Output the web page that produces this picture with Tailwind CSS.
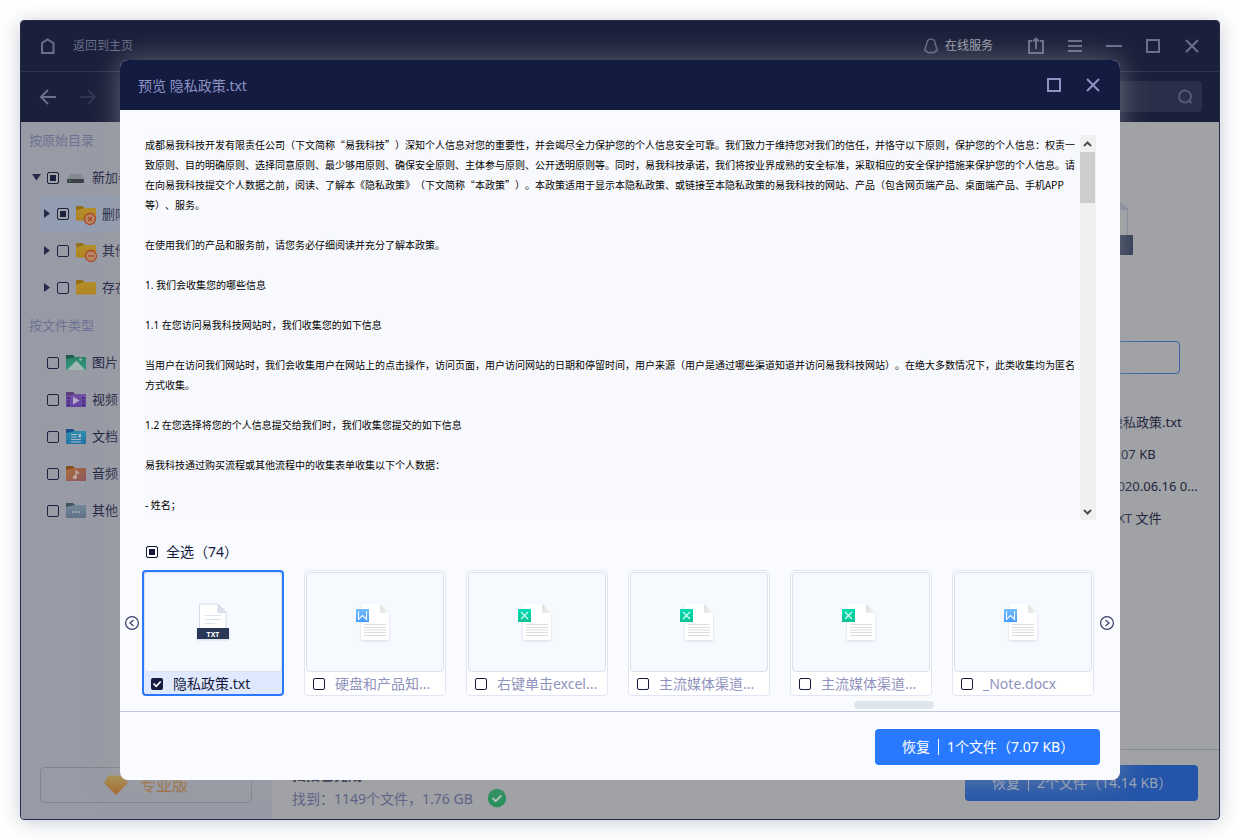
<!DOCTYPE html>
<html lang="zh-CN">
<head>
<meta charset="utf-8">
<title>预览 隐私政策.txt</title>
<script src="https://cdn.jsdelivr.net/npm/@tailwindcss/browser@4"></script>
</head>
<body class="h-screen overflow-hidden bg-white p-5 font-['Noto_Sans','Noto_Sans_CJK_SC',sans-serif] text-sm text-[#141b3f]">
<svg class="absolute h-0 w-0" aria-hidden="true">
  <defs>
    <linearGradient id="gw" x1="0" y1="0" x2="0" y2="1"><stop offset="0" stop-color="#74bdff"/><stop offset="1" stop-color="#4598fb"/></linearGradient>
    <linearGradient id="gx" x1="0" y1="0" x2="0" y2="1"><stop offset="0" stop-color="#00dcb4"/><stop offset="1" stop-color="#0cc292"/></linearGradient>
    <linearGradient id="gf" x1="0" y1="0" x2="1" y2="1"><stop offset="0" stop-color="#dcdcdc"/><stop offset="1" stop-color="#f4f4f4"/></linearGradient>
    <linearGradient id="gy" x1="0" y1="0" x2="0" y2="1"><stop offset="0" stop-color="#b48f2c"/><stop offset="1" stop-color="#b08322"/></linearGradient>
    <linearGradient id="gd" x1="0" y1="0" x2="0" y2="1"><stop offset="0" stop-color="#ab9250"/><stop offset="1" stop-color="#a8662c"/></linearGradient>
    <linearGradient id="gg" x1="0" y1="0" x2="0" y2="1"><stop offset="0" stop-color="#2c8267"/><stop offset="1" stop-color="#329b80"/></linearGradient>
    <linearGradient id="gp" x1="0" y1="0" x2="0" y2="1"><stop offset="0" stop-color="#744fa2"/><stop offset="1" stop-color="#6442a0"/></linearGradient>
    <linearGradient id="gb" x1="0" y1="0" x2="0" y2="1"><stop offset="0" stop-color="#2e8eae"/><stop offset="1" stop-color="#2272a4"/></linearGradient>
    <linearGradient id="go" x1="0" y1="0" x2="1" y2="1"><stop offset="0" stop-color="#ae6e3c"/><stop offset="1" stop-color="#8a5560"/></linearGradient>
    <linearGradient id="gs" x1="0" y1="0" x2="0" y2="1"><stop offset="0" stop-color="#74889a"/><stop offset="1" stop-color="#5f7286"/></linearGradient>
    <filter id="sh" x="-20%" y="-20%" width="140%" height="150%"><feDropShadow dx="0" dy="1" stdDeviation="1" flood-color="#55607a" flood-opacity=".22"/></filter>
    <symbol id="page" viewBox="0 0 40 42">
      <path filter="url(#sh)" d="M7 3h18l9 9v26a1 1 0 0 1-1 1H7a1 1 0 0 1-1-1V4a1 1 0 0 1 1-1z" fill="#fff"/>
      <path d="M25 3l9 9h-9z" fill="url(#gf)"/>
      <path d="M9 23.500h22M9 26.500h22M9 31.500h22M9 34.500h22" stroke="#dedede"/><path d="M9 29h22" stroke="#efefef" stroke-width="2"/>
    </symbol>
    <symbol id="word" viewBox="0 0 40 42">
      <use href="#page"/><rect x="1" y="8" width="13" height="13" fill="url(#gw)"/>
      <path d="M3.500 10.500v8l4-4 4 4v-8" fill="none" stroke="#fff" stroke-width="1.100"/>
    </symbol>
    <symbol id="excel" viewBox="0 0 40 42">
      <use href="#page"/><rect x="1" y="8" width="13" height="13" fill="url(#gx)"/>
      <path d="M4 11l7 7M11 11l-7 7" fill="none" stroke="#d8fff4" stroke-width="1.200"/>
    </symbol>
    <symbol id="txt" viewBox="0 0 40 42">
      <path d="M6.500 28V4a1 1 0 0 1 1-1H25l8 8.500V28" fill="#fff" stroke="#d5dbe8"/>
      <path d="M25 3l8 8.500h-8z" fill="#dbe3f0" stroke="#cdd6e6" stroke-width=".8"/>
      <path d="M12 14.500h16M12 18.500h16M12 22.500h10" stroke="#dbe3f1"/>
      <rect filter="url(#sh)" x="4" y="27" width="32" height="11" rx=".5" fill="#2b3759"/>
    </symbol>
    <symbol id="folder" viewBox="0 0 20 17">
      <path d="M0 2q0-1 1-1h5.500l2 2H20v4H0z" fill="#917018"/><path d="M0 5.500L8.500 3H20v12.500H0z" fill="url(#gy)"/>
    </symbol>
  </defs>
</svg>

<div class="relative h-full">
  <!-- Application window behind the dialog -->
  <div class="flex h-full flex-col overflow-hidden rounded border border-[#262b4d] bg-[#a1a2a6] shadow-[0_2px_20px_rgba(110,125,145,0.4)]">
    <header class="shrink-0 bg-[#1a1f3a] text-[#6a6f8c]">
      <div class="flex h-[51px] items-center border-b border-[#2f344e] pr-[18px] pl-[19px] text-xs">
        <a href="#" class="flex items-center gap-[17px]">
          <svg class="h-4 w-4" viewBox="0 0 16 16" fill="none" stroke="currentColor" stroke-width="2"><path d="M2 15V5l5.500-3.500L13.500 5v10z"/></svg>
          返回到主页
        </a>
        <a href="#" class="ml-auto flex items-center gap-1.5 text-[#a0a2ab]">
          <svg class="h-4 w-4" viewBox="0 0 16 16" fill="none" stroke="#5f6480" stroke-width="1.600"><path d="M8 1C5.300 1 3.800 3.200 3.800 5.500 3.800 7.800 1.800 9.200 1.800 12c0 1 .7 1.200 1.400.8.4 1.300 1.300 2 2.500 2 1 0 1.500-.4 2.300-.4s1.300.4 2.300.4c1.200 0 2.100-.7 2.500-2 .7.4 1.400.2 1.400-.8 0-2.800-2-4.200-2-6.500C12.200 3.200 10.700 1 8 1z"/></svg>
          在线服务
        </a>
        <button class="ml-[34px]" aria-label="分享"><svg class="block h-[18px] w-[18px]" viewBox="0 0 18 18" fill="none" stroke="currentColor" stroke-width="2"><path d="M5 4H2v12h14V4h-3M9 12V2M6 4.500l3-3 3 3"/></svg></button>
        <button class="ml-[21px]" aria-label="菜单"><svg class="block h-[18px] w-[18px]" viewBox="0 0 18 18" stroke="currentColor" stroke-width="2"><path d="M2 4h14M2 9h14M2 14h14"/></svg></button>
        <button class="ml-[21px]" aria-label="最小化"><svg class="block h-[18px] w-[18px]" viewBox="0 0 18 18" stroke="currentColor" stroke-width="2"><path d="M1 9h16"/></svg></button>
        <button class="ml-[21px]" aria-label="最大化"><svg class="block h-[18px] w-[18px]" viewBox="0 0 18 18" fill="none" stroke="currentColor" stroke-width="2"><path d="M3 3h12v12H3z"/></svg></button>
        <button class="ml-[21px]" aria-label="关闭"><svg class="block h-[18px] w-[18px]" viewBox="0 0 18 18" stroke="currentColor" stroke-width="2"><path d="M3 3l12 12M15 3L3 15"/></svg></button>
      </div>
      <div class="flex h-[50px] items-center pr-[17px] pl-[18px]">
        <button aria-label="后退"><svg class="block h-[18px] w-[18px]" viewBox="0 0 18 18" fill="none" stroke="currentColor" stroke-width="2"><path d="M17 9H2M9 2L2 9l7 7"/></svg></button>
        <button class="ml-[22px]" aria-label="前进"><svg class="block h-[18px] w-[18px]" viewBox="0 0 18 18" fill="none" stroke="#30354f" stroke-width="2"><path d="M1 9h15M9 2l7 7-7 7"/></svg></button>
        <div class="ml-auto mb-px flex h-[31px] w-60 items-center rounded bg-[#2a2f49] pr-2">
          <input type="text" aria-label="搜索" class="min-w-0 flex-1 bg-transparent outline-none">
          <svg class="h-[18px] w-[18px]" viewBox="0 0 18 18" fill="none" stroke="#555a74" stroke-width="2"><circle cx="9" cy="8.500" r="6"/><path d="M12.500 12l3 3"/></svg>
        </div>
      </div>
    </header>

    <div class="flex min-h-0 flex-1">
      <aside class="flex w-[251px] shrink-0 flex-col bg-[#989ba5] text-[13px] whitespace-nowrap text-[#1c2240]">
        <h2 class="flex h-[37px] items-center pl-2 text-[#6e7193]">按原始目录</h2>
        <label class="flex h-[37px] items-center pl-[11px]">
          <svg class="mr-[5px] h-[10px] w-[10px]" viewBox="0 0 10 10" fill="#262b4c"><path d="M0 1h9L4.500 7.500z"/></svg>
          <input type="checkbox" checked class="h-3 w-3 appearance-none rounded-xs border border-[#1c2240] bg-[#1c2240] shadow-[inset_0_0_0_2px_#a1a2a6]">
          <svg class="mr-2 ml-2 h-[17px] w-[17px]" viewBox="0 0 17 17"><path d="M3 5h11l3 5H0z" fill="#85888f"/><rect y="10" width="17" height="4" rx="1" fill="#3c3f48"/><rect x="2" y="11" width="1.500" height="1.500" fill="#3f9a5a"/></svg>
          新加卷
        </label>
        <label class="ml-[18px] flex h-9 items-center rounded bg-[#939db1] pl-1">
          <svg class="mr-1 h-[10px] w-[10px]" viewBox="0 0 10 10" fill="#262b4c"><path d="M1 0v9l6-4.500z"/></svg>
          <input type="checkbox" checked class="h-3 w-3 appearance-none rounded-xs border border-[#1c2240] bg-[#1c2240] shadow-[inset_0_0_0_2px_#a1a2a6]">
          <svg class="mr-1.5 ml-[7px] h-[22px] w-5 overflow-visible" viewBox="0 0 20 22"><use href="#folder" y="2" width="20" height="17"/><circle cx="14" cy="16" r="5.500" fill="#b58a64" stroke="#ad4428" stroke-width="1.300"/><path d="M12 14l4 4M16 14l-4 4" stroke="#ad4428" stroke-width="1.300"/></svg>
          删除
        </label>
        <label class="ml-[18px] flex h-[37px] items-center pl-1">
          <svg class="mr-1 h-[10px] w-[10px]" viewBox="0 0 10 10" fill="#262b4c"><path d="M1 0v9l6-4.500z"/></svg>
          <input type="checkbox" class="h-3 w-3 appearance-none rounded-xs border border-[#1c2240]">
          <svg class="mr-1.5 ml-[7px] h-[22px] w-5 overflow-visible" viewBox="0 0 20 22"><use href="#folder" y="2" width="20" height="17"/><circle cx="15" cy="16" r="5.500" fill="#b58a64" stroke="#ad4428" stroke-width="1.300"/><path d="M12 16h6" stroke="#ad4428" stroke-width="1.300"/></svg>
          其他
        </label>
        <label class="ml-[18px] flex h-[37px] items-center pl-1">
          <svg class="mr-1 h-[10px] w-[10px]" viewBox="0 0 10 10" fill="#262b4c"><path d="M1 0v9l6-4.500z"/></svg>
          <input type="checkbox" class="h-3 w-3 appearance-none rounded-xs border border-[#1c2240]">
          <svg class="mr-1.5 ml-[7px] h-[17px] w-5" viewBox="0 0 20 17"><use href="#folder"/></svg>
          存在
        </label>
        <h2 class="flex h-[38px] items-center pl-2 text-[#6e7193]">按文件类型</h2>
        <label class="flex h-[37px] items-center pl-[26px]">
          <input type="checkbox" class="h-3 w-3 appearance-none rounded-xs border border-[#1c2240]">
          <svg class="mr-1.5 ml-[7px] h-[17px] w-5" viewBox="0 0 20 17"><path d="M0 1h7l2 2h11v5H0z" fill="#1c5c46"/><path d="M0 5l9-2h11v13H0z" fill="url(#gg)"/><path d="M1 16L10.500 6.500 19 16z" fill="#a3b7b2"/><circle cx="14.500" cy="5.500" r="1.200" fill="#a3b7b2"/></svg>
          图片
        </label>
        <label class="flex h-[37px] items-center pl-[26px]">
          <input type="checkbox" class="h-3 w-3 appearance-none rounded-xs border border-[#1c2240]">
          <svg class="mr-1.5 ml-[7px] h-[17px] w-5" viewBox="0 0 20 17"><path d="M0 1h7l2 2h11v5H0z" fill="#574079"/><path d="M0 5l9-2h11v13H0z" fill="url(#gp)"/><path d="M2.500 6v9M17.500 6v9" stroke="#3d2867" stroke-width="2" stroke-dasharray="2 1.500"/><path d="M7 5.500v8l6.500-4z" fill="#b7acc8"/></svg>
          视频
        </label>
        <label class="flex h-[37px] items-center pl-[26px]">
          <input type="checkbox" class="h-3 w-3 appearance-none rounded-xs border border-[#1c2240]">
          <svg class="mr-1.5 ml-[7px] h-[17px] w-5" viewBox="0 0 20 17"><path d="M0 1h7l2 2h11v5H0z" fill="#17508a"/><path d="M0 5l9-2h11v13H0z" fill="url(#gb)"/><path d="M5 6.500h6M5 9h6M5 11.500h10M5 14h10" stroke="#a9bac6" stroke-width="1.200"/><path d="M12.500 6h2.500v3.500h-2.500z" fill="#a9bac6"/></svg>
          文档
        </label>
        <label class="flex h-[37px] items-center pl-[26px]">
          <input type="checkbox" class="h-3 w-3 appearance-none rounded-xs border border-[#1c2240]">
          <svg class="mr-1.5 ml-[7px] h-[17px] w-5" viewBox="0 0 20 17"><path d="M0 1h7l2 2h11v5H0z" fill="#84501e"/><path d="M0 5l9-2h11v13H0z" fill="url(#go)"/><circle cx="8.800" cy="12.300" r="2" fill="#c0aaa2"/><path d="M10.200 12.500V5.500c.5 1.500 2.300 1.500 2.300 3.500" fill="none" stroke="#c0aaa2" stroke-width="1.400"/></svg>
          音频
        </label>
        <label class="flex h-[37px] items-center pl-[26px]">
          <input type="checkbox" class="h-3 w-3 appearance-none rounded-xs border border-[#1c2240]">
          <svg class="mr-1.5 ml-[7px] h-[17px] w-5" viewBox="0 0 20 17"><path d="M0 1h7l2 2h11v5H0z" fill="#40545c"/><path d="M0 5l9-2h11v13H0z" fill="url(#gs)"/><path d="M6 10h2M9 10h2M12 10h2" stroke="#a7b0b9" stroke-width="1.600"/></svg>
          其他
        </label>
        <button class="mt-auto mr-5 mb-4 ml-[19px] flex h-9 items-center justify-center gap-3 rounded border border-[#83858b] text-base text-[#a06c38]">
          <svg class="h-[22px] w-6" viewBox="0 0 24 22"><path d="M4.500 1.500h15L24 9 12 21 0 9z" fill="url(#gd)"/></svg>
          专业版
        </button>
      </aside>

      <div class="flex min-w-0 flex-1 flex-col">
        <div class="flex min-h-0 flex-1 justify-end">
          <section class="w-[240px] pt-[76px] text-[#20243c]">
            <svg class="ml-[88px] block h-[60px] w-[66px]" viewBox="0 0 66 60"><path d="M4.500 38V1.500H50l10.500 9.500V38" fill="none" stroke="#858a9c"/><path d="M50 1.500l10.500 9.500H50z" fill="#8d94a2" stroke="#7f879a"/><rect y="37" width="66" height="20" rx="1" fill="#313a54"/></svg>
            <input type="text" aria-label="备注" class="mt-[83px] ml-px block h-[33px] w-[200px] rounded border border-[#3b64a5]">
            <dl class="mt-[32px] grid grid-cols-[131px_1fr] text-[13px] leading-8 whitespace-nowrap">
              <dt>文件名</dt><dd>隐私政策.txt</dd>
              <dt>大小</dt><dd>7.07 KB</dd>
              <dt>日期</dt><dd>2020.06.16 0...</dd>
              <dt>类型</dt><dd>TXT 文件</dd>
            </dl>
          </section>
        </div>
        <footer class="flex h-[70px] shrink-0 justify-between border-t border-[#858897] pr-[21px] pl-5">
          <div class="flex items-end gap-3.5 pb-2 text-[#5c6084]">
            <div class="leading-6">
              <p class="font-bold text-[#1c2240]">扫描已完成</p>
              <p>找到：1149个文件，1.76 GB</p>
            </div>
            <svg class="mb-[3px] h-5 w-5" viewBox="0 0 20 20"><circle cx="10" cy="10" r="9.200" fill="#27905a"/><path d="M5.500 10l3.200 3.200 5.600-5.700" fill="none" stroke="#b4c4bd" stroke-width="2"/></svg>
          </div>
          <button class="mt-[15px] flex h-9 w-[233px] items-center gap-2 rounded bg-[#2455a9] pl-[27px] text-[#9aa3b6]">恢复<span class="h-4 w-px bg-[#9aa3b6]"></span>2个文件（14.14 KB）</button>
        </footer>
      </div>
    </div>
  </div>

  <!-- Preview dialog -->
  <section role="dialog" aria-label="预览" class="absolute inset-x-25 inset-y-10 flex flex-col overflow-hidden rounded-lg bg-[#f9fbff] shadow-[0_0_30px_rgba(161,162,166,0.55)]">
    <header class="flex h-[50px] shrink-0 items-center bg-[#141b41] px-[18px] pt-0.5 text-[#8e94c4]">
      <h1>预览 隐私政策.txt</h1>
      <button class="ml-auto" aria-label="最大化"><svg class="block h-[18px] w-[18px]" viewBox="0 0 18 18" fill="none" stroke="currentColor" stroke-width="2"><path d="M3 2h12v12H3z"/></svg></button>
      <button class="ml-[21px]" aria-label="关闭"><svg class="block h-[18px] w-[18px]" viewBox="0 0 18 18" stroke="currentColor" stroke-width="2"><path d="M3 2l12 12M15 2L3 14"/></svg></button>
    </header>

    <div class="mx-6 mt-[25px] flex min-h-0 flex-1">
      <article class="min-w-0 flex-1 overflow-hidden bg-[#f8f9fd] pr-[3px] pl-px text-[10px] leading-5 text-black [text-spacing-trim:space-all]">
        <p class="mb-5 font-['Noto_Sans_CJK_SC',sans-serif]">成都易我科技开发有限责任公司（下文简称“易我科技”）深知个人信息对您的重要性，并会竭尽全力保护您的个人信息安全可靠。我们致力于维持您对我们的信任，并恪守以下原则，保护您的个人信息：权责一致原则、目的明确原则、选择同意原则、最少够用原则、确保安全原则、主体参与原则、公开透明原则等。同时，易我科技承诺，我们将按业界成熟的安全标准，采取相应的安全保护措施来保护您的个人信息。请在向易我科技提交个人数据之前，阅读、了解本《隐私政策》（下文简称“本政策”）。本政策适用于显示本隐私政策、或链接至本隐私政策的易我科技的网站、产品（包含网页端产品、桌面端产品、手机APP等）、服务。</p>
        <p class="mb-5">在使用我们的产品和服务前，请您务必仔细阅读并充分了解本政策。</p>
        <p class="mb-5">1. 我们会收集您的哪些信息</p>
        <p class="mb-5">1.1 在您访问易我科技网站时，我们收集您的如下信息</p>
        <p class="mb-5">当用户在访问我们网站时，我们会收集用户在网站上的点击操作，访问页面，用户访问网站的日期和停留时间，用户来源（用户是通过哪些渠道知道并访问易我科技网站）。在绝大多数情况下，此类收集均为匿名方式收集。</p>
        <p class="mb-5">1.2 在您选择将您的个人信息提交给我们时，我们收集您提交的如下信息</p>
        <p class="mb-5">易我科技通过购买流程或其他流程中的收集表单收集以下个人数据：</p>
        <p>- 姓名；</p>
      </article>
      <div class="flex w-4 shrink-0 flex-col bg-[#f0f0f0] text-[#505050]">
        <svg class="h-[17px] w-4" viewBox="0 0 16 17" fill="none" stroke="currentColor" stroke-width="2"><path d="M4 11l3.500-3.500L11 11"/></svg>
        <div class="mr-px h-[51px] bg-[#cdcdcd]"></div>
        <svg class="mt-auto h-[17px] w-4" viewBox="0 0 16 17" fill="none" stroke="currentColor" stroke-width="2"><path d="M4 7l3.500 3.500L11 7"/></svg>
      </div>
    </div>

    <label class="mt-5 ml-[26px] flex h-6 shrink-0 items-center gap-2 self-start">
      <input type="checkbox" checked class="h-3 w-3 appearance-none rounded-xs border border-[#141b3f] bg-[#141b3f] shadow-[inset_0_0_0_2px_#fff]">
      全选（74）
    </label>

    <div class="mt-1.5 flex shrink-0 items-start pr-1.5 pl-[5px] text-[#8f93bd]">
      <button class="mt-[46px] mr-[3px] shrink-0" aria-label="上一页"><svg class="block h-[14px] w-[14px]" viewBox="0 0 14 14" fill="none" stroke="#3a3f66" stroke-width="1.200"><circle cx="7" cy="7" r="6.400"/><path d="M8.500 4L5 7l3.500 3"/></svg></button>
      <ul class="grid min-w-0 flex-1 grid-cols-6 gap-5 whitespace-nowrap">
        <li class="rounded border-2 border-[#2979ff] bg-[#dfe8fd] text-[#141b3f]">
          <div class="relative flex h-[100px] items-center justify-center rounded border border-[#dfe2f0] bg-[#f6f9fe]">
            <svg class="h-[42px] w-10" aria-hidden="true"><use href="#txt"/></svg>
            <span class="absolute inset-x-0 top-[57px] text-center text-[7px] leading-[10px] font-bold text-white">TXT</span>
          </div>
          <label class="flex h-[22px] items-center gap-2.5 pt-0.5 pl-[7px]">
            <span class="relative flex"><input type="checkbox" checked class="h-3 w-3 appearance-none rounded-xs bg-[#141b3f]"><svg class="pointer-events-none absolute inset-0 h-3 w-3" viewBox="0 0 12 12" fill="none" stroke="#fff" stroke-width="1.800"><path d="M2.500 5.500l2.700 2.800 4.500-4.800"/></svg></span>
            隐私政策.txt
          </label>
        </li>
        <li class="rounded border border-[#e2e5f4] bg-white p-px">
          <div class="flex h-[100px] items-center justify-center rounded border border-[#dcdfec] bg-[#f6f9fe]"><svg class="h-[42px] w-10" aria-hidden="true"><use href="#word"/></svg></div>
          <label class="flex h-[22px] items-center gap-2.5 pt-0.5 pl-[7px]"><input type="checkbox" class="h-3 w-3 appearance-none rounded-xs border border-[#141b3f]">硬盘和产品知...</label>
        </li>
        <li class="rounded border border-[#e2e5f4] bg-white p-px">
          <div class="flex h-[100px] items-center justify-center rounded border border-[#dcdfec] bg-[#f6f9fe]"><svg class="h-[42px] w-10" aria-hidden="true"><use href="#excel"/></svg></div>
          <label class="flex h-[22px] items-center gap-2.5 pt-0.5 pl-[7px]"><input type="checkbox" class="h-3 w-3 appearance-none rounded-xs border border-[#141b3f]">右键单击excel...</label>
        </li>
        <li class="rounded border border-[#e2e5f4] bg-white p-px">
          <div class="flex h-[100px] items-center justify-center rounded border border-[#dcdfec] bg-[#f6f9fe]"><svg class="h-[42px] w-10" aria-hidden="true"><use href="#excel"/></svg></div>
          <label class="flex h-[22px] items-center gap-2.5 pt-0.5 pl-[7px]"><input type="checkbox" class="h-3 w-3 appearance-none rounded-xs border border-[#141b3f]">主流媒体渠道...</label>
        </li>
        <li class="rounded border border-[#e2e5f4] bg-white p-px">
          <div class="flex h-[100px] items-center justify-center rounded border border-[#dcdfec] bg-[#f6f9fe]"><svg class="h-[42px] w-10" aria-hidden="true"><use href="#excel"/></svg></div>
          <label class="flex h-[22px] items-center gap-2.5 pt-0.5 pl-[7px]"><input type="checkbox" class="h-3 w-3 appearance-none rounded-xs border border-[#141b3f]">主流媒体渠道...</label>
        </li>
        <li class="rounded border border-[#e2e5f4] bg-white p-px">
          <div class="flex h-[100px] items-center justify-center rounded border border-[#dcdfec] bg-[#f6f9fe]"><svg class="h-[42px] w-10" aria-hidden="true"><use href="#word"/></svg></div>
          <label class="flex h-[22px] items-center gap-2.5 pt-0.5 pl-[7px]"><input type="checkbox" class="h-3 w-3 appearance-none rounded-xs border border-[#141b3f]">_Note.docx</label>
        </li>
      </ul>
      <button class="mt-[46px] ml-1.5 shrink-0" aria-label="下一页"><svg class="block h-[14px] w-[14px]" viewBox="0 0 14 14" fill="none" stroke="#3a3f66" stroke-width="1.200"><circle cx="7" cy="7" r="6.400"/><path d="M5.500 4L9 7l-3.500 3"/></svg></button>
    </div>

    <div class="mt-[5px] mr-[186px] mb-0.5 h-2 w-20 shrink-0 self-end rounded bg-[#dfe5ed]"></div>

    <footer class="flex h-[69px] shrink-0 items-start justify-end border-t border-[#c0c9dd] px-5 pt-[17px]">
      <button class="flex h-9 w-[225px] items-center gap-2 rounded bg-[#2979ff] pl-[27px] text-white">恢复<span class="h-4 w-px bg-white"></span>1个文件（7.07 KB）</button>
    </footer>
  </section>
</div>
</body>
</html>
